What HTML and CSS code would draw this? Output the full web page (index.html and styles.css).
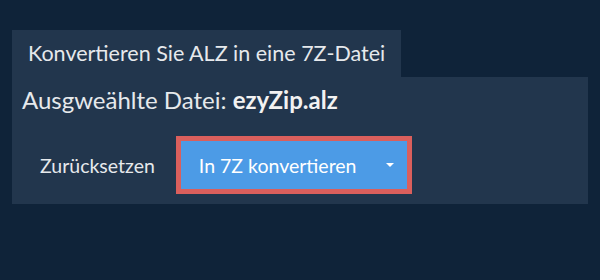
FILE: index.html
```html
<!DOCTYPE html>
<html lang="de">
<head>
<meta charset="utf-8">
<link rel="stylesheet" href="styles.css">
</head>
<body>
<div class="wrap">
  <div class="tab">Konvertieren Sie ALZ in eine 7Z-Datei</div>
  <div class="panel">
    <div class="file">Ausgweählte Datei: <b>ezyZip.alz</b></div>
    <div class="actions">
      <span class="reset">Zurücksetzen</span>
      <div class="convert">
        <span class="label">In 7Z konvertieren</span>
        <span class="caret"></span>
      </div>
    </div>
  </div>
</div>
</body>
</html>
```
FILE: styles.css
```css
html, body {
  margin: 0;
  padding: 0;
  background: #0f2339;
  font-family: Lato, "Noto Sans", sans-serif;
  color: #e6e9ec;
}
.wrap {
  padding: 30px 12px 0 12px;
}
.tab {
  display: block;
  background: #22364d;
  height: 47px;
  line-height: 46px;
  padding: 0 0 0 16px;
  font-size: 21.5px;
  box-sizing: border-box;
  width: 389px;
  white-space: nowrap;
}
.panel {
  background: #22364d;
  width: 576px;
  height: 127px;
  box-sizing: border-box;
  padding: 8px 10px 0 10px;
}
.file {
  font-size: 24px;
  line-height: 30px;
  white-space: nowrap;
}
.file b {
  font-weight: 700;
  color: #f2f2f2;
}
.actions {
  display: flex;
  align-items: center;
  margin-top: 21px;
}
.reset {
  font-size: 19.5px;
  padding: 0 0 0 18px;
  margin-right: 21px;
  white-space: nowrap;
}
.convert {
  display: flex;
  align-items: center;
  width: 236px;
  height: 58px;
  box-sizing: border-box;
  border: 5px solid #da5f5c;
  background: #4c9be6;
  color: #fff;
  font-size: 19.5px;
  padding: 0 0 0 18px;
  white-space: nowrap;
}
.label {
  flex: 1;
}
.caret {
  width: 0;
  height: 0;
  border-left: 4px solid transparent;
  border-right: 4px solid transparent;
  border-top: 4px solid #fff;
  margin-right: 13px;
}
```
